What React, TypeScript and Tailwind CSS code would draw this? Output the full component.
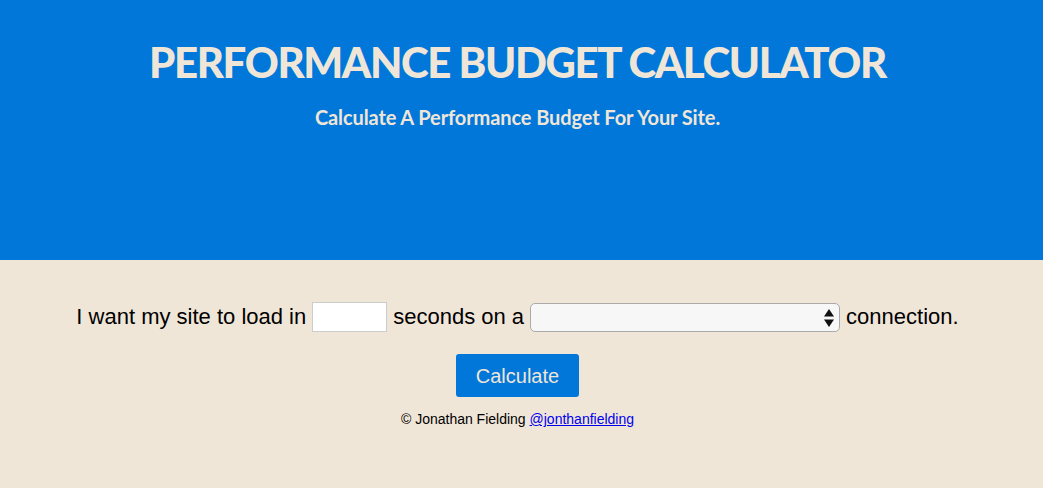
import React from 'react'

const App = () => {
  return (
    <div className="min-h-[488px] bg-[#f0e6d8] font-['Liberation_Sans',Arial,sans-serif]">
      {/* header */}
      <header className="h-[260px] bg-[#0077d9] pt-[39px] pr-[8px] text-center text-[#f0e6d8] font-['Lato',sans-serif]">
        <h1 className="text-[42px] font-black leading-[46px] tracking-[-1.4px]">PERFORMANCE BUDGET CALCULATOR</h1>
        <p className="mt-[20px] text-[20px] font-bold leading-6 tracking-[-0.1px]">Calculate A Performance Budget For Your Site.</p>
      </header>

      {/* form */}
      <main className="pt-[40px] pr-[8px] text-center">
        <form className="flex items-center justify-center gap-[6px] text-[22px] text-black">
          <label>I want my site to load in</label>
          <input type="text" className="h-[30px] w-[75px] border border-[#ccc] bg-white" />
          <span>seconds on a</span>
          <div className="relative mt-[2px] h-[29px] w-[310px] rounded-[5px] border border-[#aaa] bg-[#f7f7f7]">
            <svg className="absolute right-[4px] top-[4px]" width="12" height="20" viewBox="0 0 12 20">
              <path d="M1 8.5 L6 1 L11 8.5 Z" fill="#111" />
              <path d="M1 11.5 L6 19 L11 11.5 Z" fill="#111" />
            </svg>
          </div>
          <span>connection.</span>
        </form>
        <button className="mt-[21px] h-[43px] w-[123px] rounded-[3px] bg-[#0077d9] text-[20px] text-[#f0e6d8]">Calculate</button>
        <p className="mt-[12px] text-[14px] text-black">
          © Jonathan Fielding <a href="#" className="text-[#0000ee] underline">@jonthanfielding</a>
        </p>
      </main>
    </div>
  )
}

export default App
